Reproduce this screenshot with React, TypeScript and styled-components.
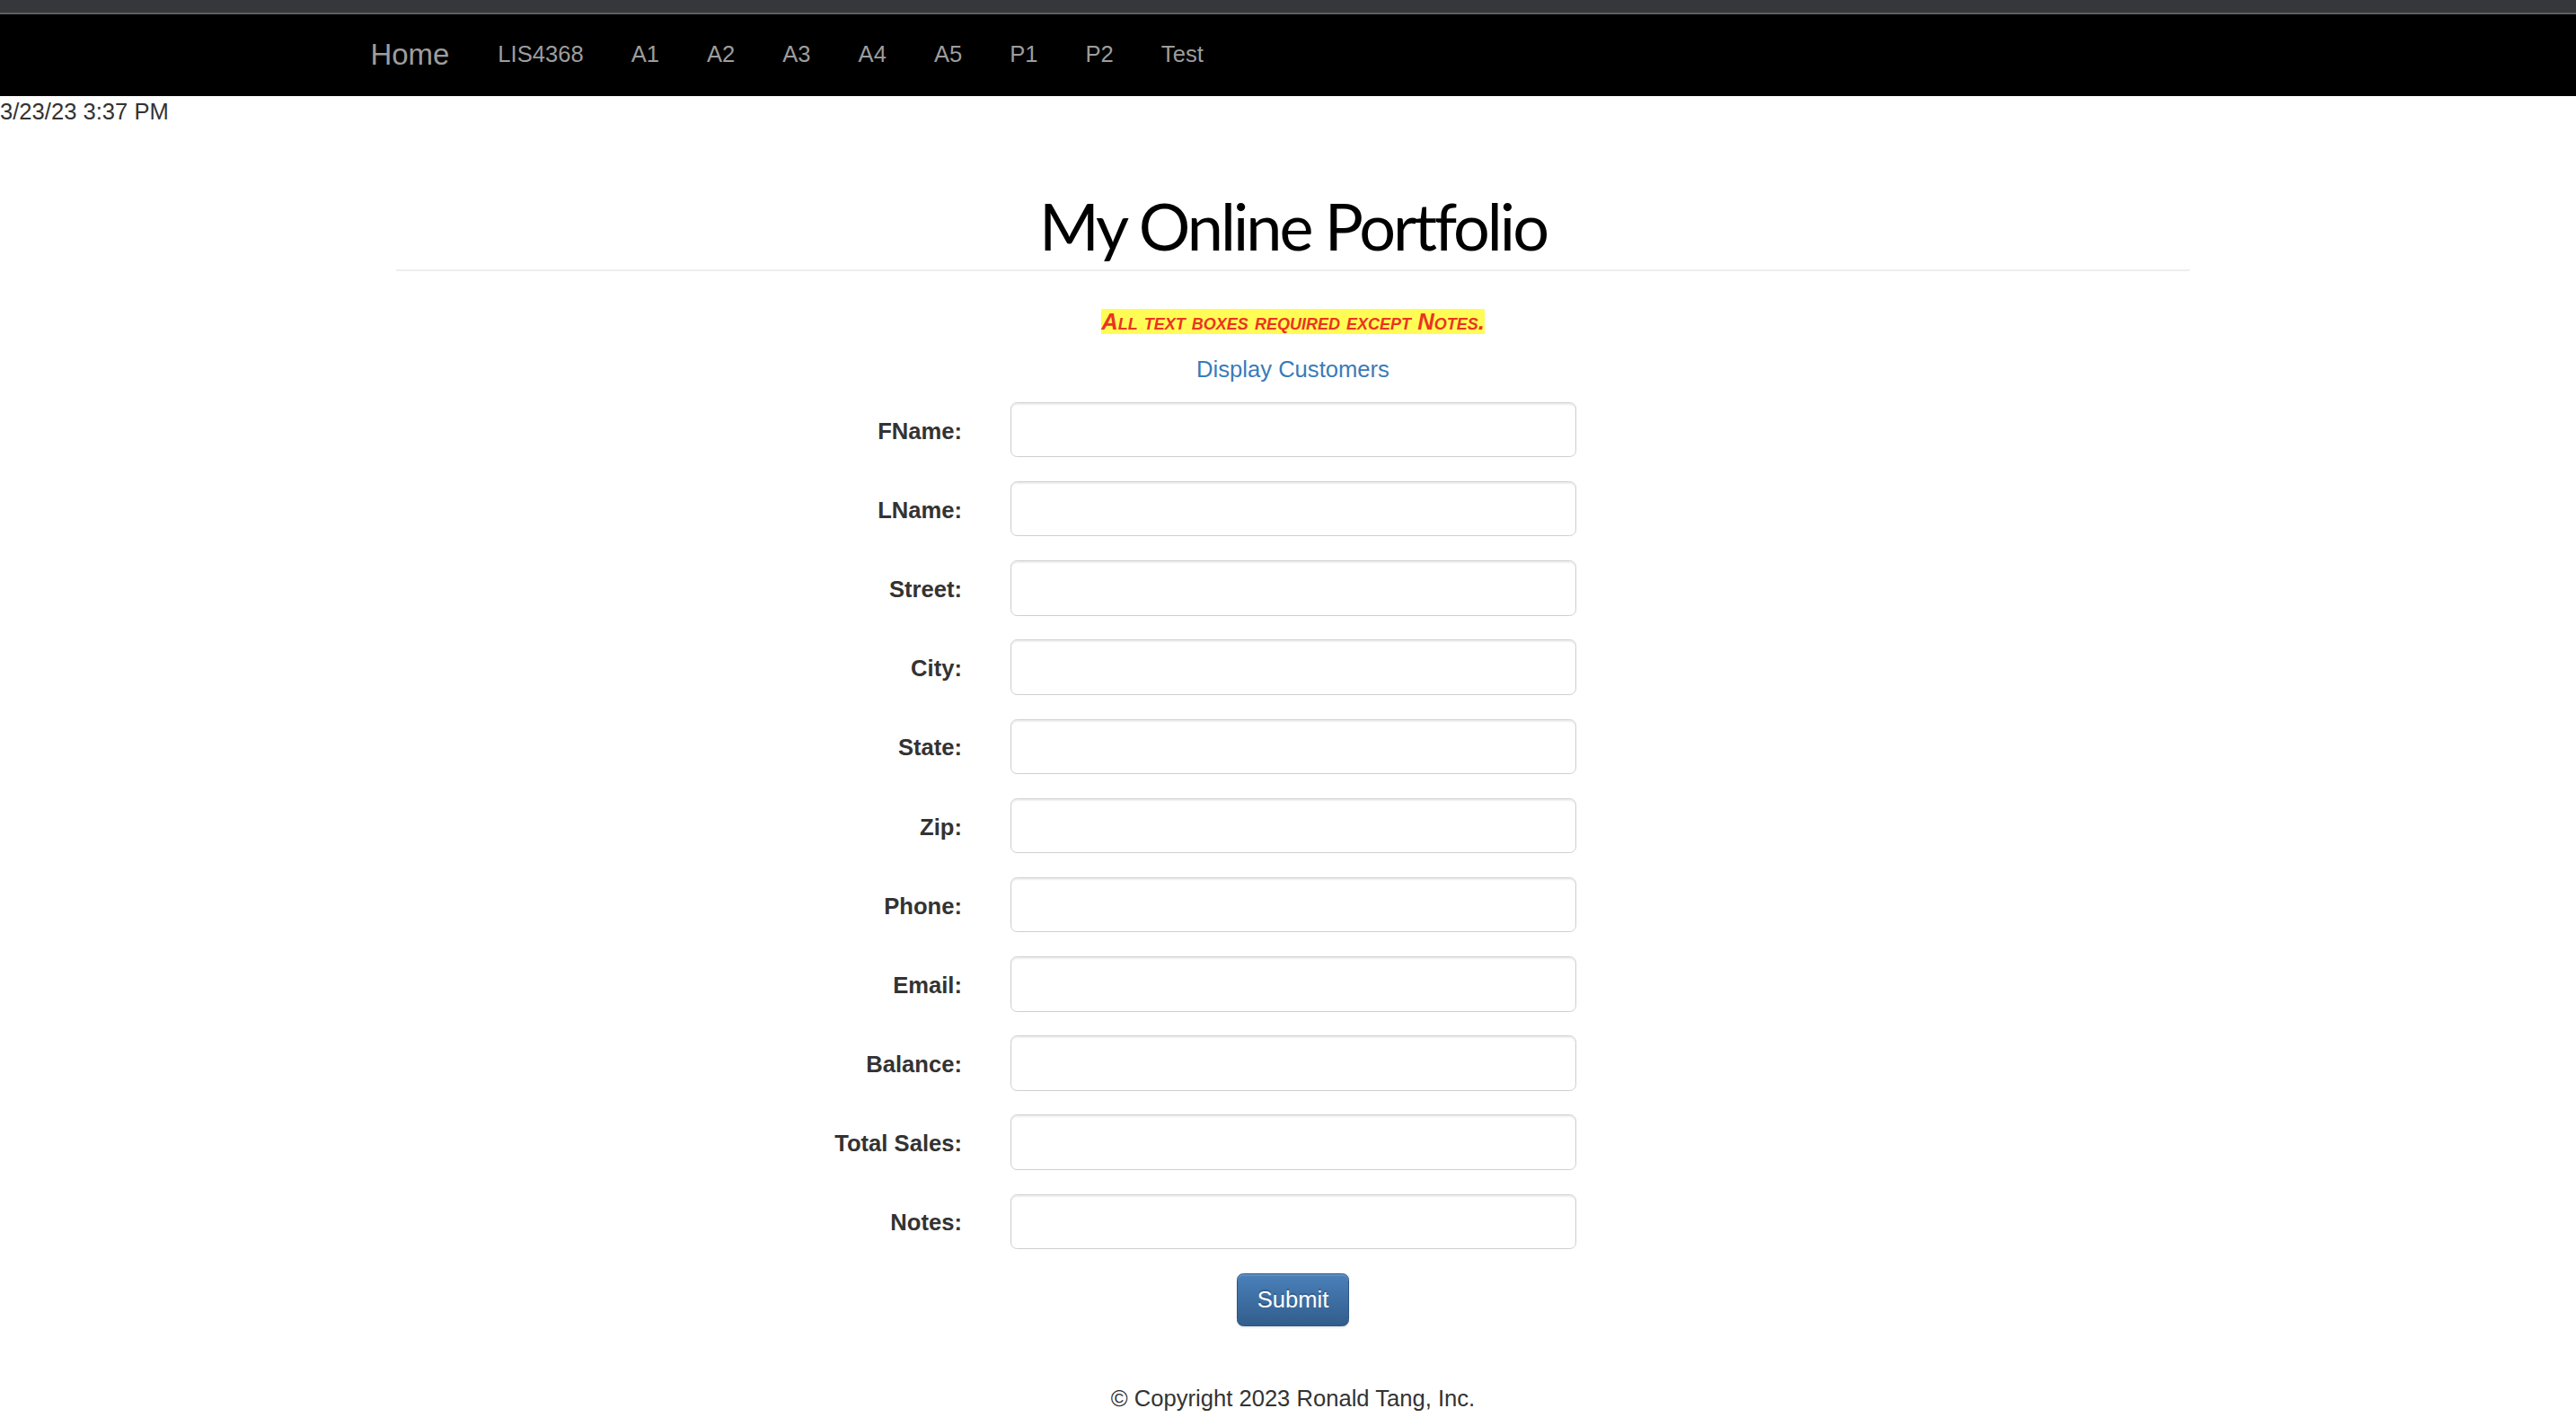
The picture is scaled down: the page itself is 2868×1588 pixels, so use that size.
import React from 'react'
import styled, { createGlobalStyle } from 'styled-components'

const GlobalStyle = createGlobalStyle`
    html, body {
        margin: 0;
        padding: 0;
        background: #fff;
    }
    body {
        font-family: "Liberation Sans", Arial, Helvetica, sans-serif;
        font-size: 25.6px;
        line-height: 36.6px;
        color: #333;
    }
    * {
        box-sizing: border-box;
    }
`

const ChromeStrip = styled.div`
    height: 16px;
    background: #36373b;
    border-bottom: 2px solid #5f5f61;
`

const Navbar = styled.nav`
    height: 91px;
    background: #000;
`

const NavInner = styled.div`
    width: 2098px;
    height: 100%;
    margin: 0 auto;
    display: flex;
    align-items: flex-start;
`

const Brand = styled.a`
    padding: 26.7px 27.4px 0;
    font-size: 33px;
    line-height: 36.6px;
    color: #9d9d9d;
    text-decoration: none;
`

const NavLink = styled.a`
    padding: 26.2px 26.5px 0;
    font-size: 25.6px;
    line-height: 36.6px;
    color: #9d9d9d;
    text-decoration: none;
`

const Timestamp = styled.div`
    line-height: 34px;
    color: #333;
`

const Main = styled.main`
    width: 1997px;
    margin-left: 441px;
    display: flex;
    flex-direction: column;
`

const PageHeader = styled.h1`
    margin: 68px 0 0;
    padding-bottom: 6px;
    border-bottom: 2px solid #eee;
    font-family: Lato, "Open Sans", sans-serif;
    font-weight: 400;
    font-size: 72px;
    letter-spacing: -3px;
    line-height: 85px;
    color: #000;
    text-align: center;
`

const Notice = styled.p`
    margin: 37.6px 0 0;
    text-align: center;
`

const Highlight = styled.span`
    background: #fffd55;
    color: #eb3323;
    font-weight: 700;
    font-style: italic;
    font-variant: small-caps;
`

const LinkLine = styled.p`
    margin: 16.4px 0 0;
    text-align: center;
`

const BlueLink = styled.a`
    color: #3a7bb8;
    text-decoration: none;
`

const Form = styled.form`
    margin-top: 18.6px;
    display: flex;
    flex-direction: column;
    gap: 26.7px;
`

const FormGroup = styled.div`
    display: flex;
    gap: 54px;
`

const Label = styled.label`
    width: 630px;
    padding-top: 13.8px;
    text-align: right;
    font-weight: 700;
    color: #333;
`

const Input = styled.input`
    width: 630px;
    height: 61.5px;
    padding: 11px 22px;
    border: 1.8px solid #cfcfcf;
    border-radius: 7.3px;
    box-shadow: inset 0 1.8px 1.8px rgba(0, 0, 0, 0.075);
    font-family: inherit;
    font-size: 25.6px;
    color: #555;
    background: #fff;
    outline: none;
`

const ButtonRow = styled.div`
    margin-top: 27px;
    display: flex;
    justify-content: center;
`

const SubmitButton = styled.button`
    width: 125px;
    height: 59px;
    padding: 0;
    border: 1.8px solid #2c5684;
    border-radius: 7.3px;
    background: linear-gradient(to bottom, #4a80ba 0%, #325d8b 100%);
    box-shadow: inset 0 1.8px 0 rgba(255, 255, 255, 0.15),
        0 1.8px 1.8px rgba(0, 0, 0, 0.075);
    font-family: inherit;
    font-size: 25.6px;
    color: #fff;
    text-shadow: 0 -1.8px 0 rgba(0, 0, 0, 0.2);
    cursor: pointer;
`

const Footer = styled.footer`
    margin-top: 62px;
    text-align: center;
    color: #333;
`

const navItems = ['LIS4368', 'A1', 'A2', 'A3', 'A4', 'A5', 'P1', 'P2', 'Test']

const fields = [
    'FName',
    'LName',
    'Street',
    'City',
    'State',
    'Zip',
    'Phone',
    'Email',
    'Balance',
    'Total Sales',
    'Notes',
]

export default function App() {
    return (
        <>
            <GlobalStyle />
            <ChromeStrip />
            <Navbar>
                <NavInner>
                    <Brand href="#">Home</Brand>
                    {navItems.map((item) => (
                        <NavLink key={item} href="#">
                            {item}
                        </NavLink>
                    ))}
                </NavInner>
            </Navbar>
            <Timestamp>3/23/23 3:37 PM</Timestamp>
            <Main>
                <PageHeader>My Online Portfolio</PageHeader>
                <Notice>
                    <Highlight>All text boxes required except Notes.</Highlight>
                </Notice>
                <LinkLine>
                    <BlueLink href="#">Display Customers</BlueLink>
                </LinkLine>
                <Form onSubmit={(e) => e.preventDefault()}>
                    {fields.map((field) => (
                        <FormGroup key={field}>
                            <Label>{field}:</Label>
                            <Input type="text" />
                        </FormGroup>
                    ))}
                </Form>
                <ButtonRow>
                    <SubmitButton type="submit">Submit</SubmitButton>
                </ButtonRow>
                <Footer>© Copyright 2023 Ronald Tang, Inc.</Footer>
            </Main>
        </>
    )
}
